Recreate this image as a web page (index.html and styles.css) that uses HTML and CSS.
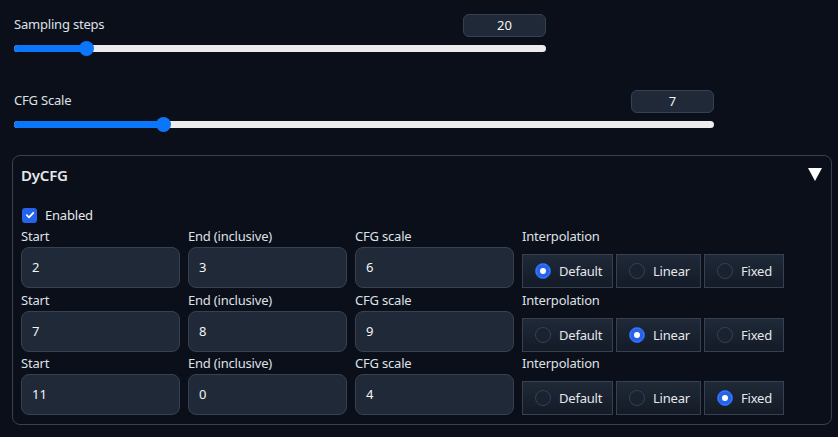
FILE: index.html
```html
<!DOCTYPE html>
<html>
<head>
<meta charset="utf-8">
<link rel="stylesheet" href="styles.css">
</head>
<body>
<div class="page">
  <div class="slider s1">
    <div class="slider-head">
      <span class="label">Sampling steps</span>
      <div class="numbox">20</div>
    </div>
    <div class="track"><div class="fill" style="width:13.7%"></div><div class="thumb" style="left:13.7%"></div></div>
  </div>

  <div class="slider s2">
    <div class="slider-head">
      <span class="label">CFG Scale</span>
      <div class="numbox">7</div>
    </div>
    <div class="track"><div class="fill" style="width:21.3%"></div><div class="thumb" style="left:21.3%"></div></div>
  </div>

  <div class="accordion">
    <div class="acc-head">
      <span class="acc-title">DyCFG</span>
      <span class="caret"></span>
    </div>
    <label class="check">
      <span class="box"><svg width="10" height="10" viewBox="0 0 10 10"><path d="M1.8 5.2 L4 7.3 L8.3 2.8" fill="none" stroke="#fff" stroke-width="1.8" stroke-linecap="round" stroke-linejoin="round"/></svg></span>
      <span class="check-label">Enabled</span>
    </label>

    <div class="rows">
      <div class="row">
        <div class="field"><div class="flabel">Start</div><div class="input">2</div></div>
        <div class="field"><div class="flabel">End (inclusive)</div><div class="input">3</div></div>
        <div class="field"><div class="flabel">CFG scale</div><div class="input">6</div></div>
        <div class="field"><div class="flabel">Interpolation</div>
          <div class="radios">
            <div class="radio r-default on"><span class="dot"></span>Default</div>
            <div class="radio r-linear"><span class="dot"></span>Linear</div>
            <div class="radio r-fixed"><span class="dot"></span>Fixed</div>
          </div>
        </div>
      </div>
      <div class="row">
        <div class="field"><div class="flabel">Start</div><div class="input">7</div></div>
        <div class="field"><div class="flabel">End (inclusive)</div><div class="input">8</div></div>
        <div class="field"><div class="flabel">CFG scale</div><div class="input">9</div></div>
        <div class="field"><div class="flabel">Interpolation</div>
          <div class="radios">
            <div class="radio r-default"><span class="dot"></span>Default</div>
            <div class="radio r-linear on"><span class="dot"></span>Linear</div>
            <div class="radio r-fixed"><span class="dot"></span>Fixed</div>
          </div>
        </div>
      </div>
      <div class="row">
        <div class="field"><div class="flabel">Start</div><div class="input">11</div></div>
        <div class="field"><div class="flabel">End (inclusive)</div><div class="input">0</div></div>
        <div class="field"><div class="flabel">CFG scale</div><div class="input">4</div></div>
        <div class="field"><div class="flabel">Interpolation</div>
          <div class="radios">
            <div class="radio r-default"><span class="dot"></span>Default</div>
            <div class="radio r-linear"><span class="dot"></span>Linear</div>
            <div class="radio r-fixed on"><span class="dot"></span>Fixed</div>
          </div>
        </div>
      </div>
    </div>
  </div>
</div>
</body>
</html>
```

FILE: styles.css
```css
* { box-sizing: border-box; }
html, body { margin: 0; padding: 0; }
body {
  background: #0b0f19;
  color: #e5e7eb;
  font-family: "Noto Sans", "Liberation Sans", sans-serif;
  font-size: 13px;
  width: 838px;
  height: 437px;
  overflow: hidden;
}
.page {
  padding: 14px 0 0 12px;
}
.slider { margin-left: 2px; }
.s1 { width: 532px; }
.s2 { width: 700px; margin-top: 38px; }
.slider-head {
  display: flex;
  justify-content: space-between;
  align-items: flex-start;
  height: 23px;
}
.label {
  color: #dde1e6;
  font-size: 13px;
  line-height: 18px;
  margin-top: 1px;
  letter-spacing: -0.2px;
}
.numbox {
  width: 83px;
  height: 23px;
  background: #1f2937;
  border: 1px solid #374151;
  border-radius: 6px;
  text-align: center;
  font-size: 13px;
  line-height: 21px;
  color: #f3f4f6;
}
.track {
  position: relative;
  margin-top: 8px;
  height: 7px;
  background: #ececec;
  border-radius: 4px;
}
.fill {
  height: 7px;
  background: #0b76fa;
  border-radius: 4px 0 0 4px;
}
.thumb {
  position: absolute;
  top: -4px;
  width: 15px;
  height: 15px;
  margin-left: -7.5px;
  border-radius: 50%;
  background: #0b76fa;
}
.accordion {
  margin-top: 27px;
  width: 820px;
  height: 270px;
  border: 1px solid #374151;
  border-radius: 8px;
  padding: 0 8px;
}
.acc-head {
  display: flex;
  justify-content: space-between;
  align-items: center;
  height: 37px;
  padding-top: 0;
}
.acc-title {
  font-size: 15px;
  font-weight: 600;
  color: #e5e7eb;
  letter-spacing: -0.2px;
}
.caret {
  width: 0; height: 0;
  border-left: 7px solid transparent;
  border-right: 7px solid transparent;
  border-top: 13px solid #ffffff;
  margin-right: 1px;
}
.check {
  display: flex;
  align-items: center;
  gap: 8px;
  margin-top: 14px;
  margin-left: 1px;
  height: 16px;
}
.box {
  width: 15px; height: 15px;
  background: #2563eb;
  border-radius: 3px;
  display: flex;
  align-items: center;
  justify-content: center;
}
.check-label { font-size: 13px; color: #e5e7eb; letter-spacing: -0.2px; }
.rows {
  display: flex;
  flex-direction: column;
  gap: 2.5px;
  margin-top: 4px;
}
.row {
  display: grid;
  grid-template-columns: 159px 159px 159px 263px;
  column-gap: 8px;
}
.flabel {
  font-size: 13px;
  line-height: 18px;
  color: #dde1e6;
  height: 20px;
  letter-spacing: -0.2px;
}
.input {
  height: 41px;
  background: #1f2937;
  border: 1px solid #374151;
  border-radius: 8px;
  padding-left: 10px;
  line-height: 39px;
  font-size: 13px;
  color: #f3f4f6;
}
.radios {
  display: flex;
  gap: 3px;
  margin-top: 7px;
}
.radio {
  height: 34px;
  display: flex;
  align-items: center;
  gap: 8px;
  padding-left: 12px;
  background: linear-gradient(to bottom, #1f2937, #141b27);
  border: 1px solid #374151;
  font-size: 13px;
  color: #e5e7eb;
  letter-spacing: -0.2px;
}
.r-default { width: 91px; }
.r-linear { width: 85px; }
.r-fixed { width: 80px; }
.dot {
  width: 16px; height: 16px;
  border-radius: 50%;
  border: 1px solid #374151;
  background: #1a2130;
  flex: none;
}
.on .dot {
  background: #2563eb;
  border-color: #2563eb;
  box-shadow: inset 0 0 0 4px #2563eb, inset 0 0 0 8px #ffffff;
}
```
